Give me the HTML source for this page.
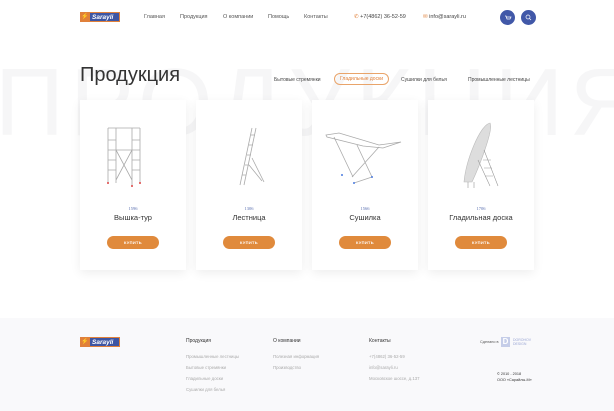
<!DOCTYPE html>
<html><head><meta charset="utf-8"><style>
*{margin:0;padding:0;box-sizing:border-box}
body{width:614px;height:411px;overflow:hidden;background:#fff;font-family:"Liberation Sans",sans-serif;position:relative;color:#333}
.a{position:absolute;white-space:nowrap}
.nav{font-size:5.5px;color:#555;top:14px}
.bg{position:absolute;left:-5px;top:55px;font-size:96px;color:#f6f6f7;letter-spacing:6px;font-weight:400;line-height:1}
.card{position:absolute;top:100px;width:106px;height:170px;background:#fff;box-shadow:0 3px 10px rgba(0,0,0,.07)}
.price{position:absolute;top:106px;width:100%;text-align:center;font-size:4.5px;color:#5a6fb0;font-family:"Liberation Serif",serif}
.name{position:absolute;top:113px;width:100%;text-align:center;font-size:7.5px;color:#333}
.btn{position:absolute;top:136px;left:27px;width:52px;height:13px;border-radius:7px;background:#e08a3c;color:#fff;font-size:4px;font-weight:bold;text-align:center;line-height:13px;letter-spacing:.3px}
.img{position:absolute;left:0;top:20px;width:106px;height:80px}
.logo{position:absolute;width:40px;height:10px;background:#3d55a3;color:#fff;font-size:6.5px;font-weight:bold;font-style:italic;line-height:10px;padding-left:11px;border:1px solid #e0803a}
.logo:before{content:"⚡";position:absolute;left:-1px;top:-1px;width:10px;height:10px;background:#e0803a;font-size:6px;text-align:center;font-style:normal}
.fh{font-size:5px;color:#333;top:338px}
.fl{font-size:4.3px;color:#aaa}
</style></head><body>
<div class="logo" style="left:80px;top:12px">Sarayli</div>
<div class="a nav" style="left:144px">Главная</div>
<div class="a nav" style="left:180px">Продукция</div>
<div class="a nav" style="left:223px">О компании</div>
<div class="a nav" style="left:268px">Помощь</div>
<div class="a nav" style="left:304px">Контакты</div>
<div class="a nav" style="left:354px;color:#444"><span style="color:#e0803a">✆</span> +7(4862) 36-52-59</div>
<div class="a nav" style="left:423px;color:#444"><span style="color:#e0803a">✉</span> info@sarayli.ru</div>
<div class="a" style="left:500px;top:10px;width:15px;height:15px;border-radius:50%;background:#4158a8"><svg width="15" height="15"><path d="M5 6h1l1 3h3l1-2H6.5" stroke="#fff" stroke-width=".7" fill="none"/></svg></div>
<div class="a" style="left:521px;top:10px;width:15px;height:15px;border-radius:50%;background:#4158a8"><svg width="15" height="15"><circle cx="7" cy="7" r="2" stroke="#fff" stroke-width=".7" fill="none"/><path d="M8.5 8.5l1.5 1.5" stroke="#fff" stroke-width=".7"/></svg></div>
<div class="bg">ПРОДУКЦИЯ</div>
<div class="a" style="left:80px;top:64px;font-size:20px;color:#333">Продукция</div>
<div class="a" style="left:274px;top:77px;font-size:5px;color:#444">Бытовые стремянки</div>
<div class="a" style="left:334px;top:73px;font-size:5px;color:#e0803a;border:1px solid #e9a46a;border-radius:6px;padding:2px 5px">Гладильные доски</div>
<div class="a" style="left:401px;top:77px;font-size:5px;color:#444">Сушилки для белья</div>
<div class="a" style="left:468px;top:77px;font-size:5px;color:#444">Промышленные лестницы</div>

<div class="card" style="left:80px"><svg class="img" viewBox="0 0 106 80"><g stroke="#aaa" stroke-width=".8" fill="none"><path d="M28 8v55M36 8v55M52 8v58M60 8v55M28 8h32M28 30h32M36 30l16 30M52 30l-16 30M28 20h8M28 40h8M28 50h8M52 20h8M52 40h8M52 50h8"/></g><circle cx="28" cy="63" r="1" fill="#d44"/><circle cx="52" cy="66" r="1" fill="#d44"/><circle cx="60" cy="63" r="1" fill="#d44"/></svg><div class="price">1596</div><div class="name">Вышка-тур</div><div class="btn">КУПИТЬ</div></div>
<div class="card" style="left:196px"><svg class="img" viewBox="0 0 106 80"><g stroke="#aaa" stroke-width=".8" fill="none"><path d="M44 65L56 8M48 65L60 8M53 45l13 16M56 38l12 24M46 55h4M49 45h4M51 35h4M53 25h4M55 15h4"/></g></svg><div class="price">1306</div><div class="name">Лестница</div><div class="btn">КУПИТЬ</div></div>
<div class="card" style="left:312px"><svg class="img" viewBox="0 0 106 80"><g stroke="#aaa" stroke-width=".8" fill="none"><path d="M14 15l13-2 40 12 22-3-18 6-20-2-36-9zM22 17l19 40M67 27l-27 30M45 25l15 32M60 57l-18 6"/></g><circle cx="30" cy="55" r="1" fill="#4a7be0"/><circle cx="42" cy="63" r="1" fill="#4a7be0"/><circle cx="60" cy="57" r="1" fill="#4a7be0"/></svg><div class="price">1566</div><div class="name">Сушилка</div><div class="btn">КУПИТЬ</div></div>
<div class="card" style="left:428px"><svg class="img" viewBox="0 0 106 80"><path d="M36 62C38 40 52 5 62 3 66 8 52 45 44 62z" fill="#ddd" stroke="#bbb" stroke-width=".6"/><g stroke="#999" stroke-width=".6" fill="none"><path d="M56 30l14 36M50 40l12 26M55 40h8M56 48h8M57 56h8M40 62v6M46 62v6"/></g></svg><div class="price">1706</div><div class="name">Гладильная доска</div><div class="btn">КУПИТЬ</div></div>

<div style="position:absolute;left:0;top:318px;width:614px;height:93px;background:#f9f9fb"></div>
<div class="logo" style="left:80px;top:337px">Sarayli</div>
<div class="a fh" style="left:186px">Продукция</div>
<div class="a fh" style="left:273px">О компании</div>
<div class="a fh" style="left:369px">Контакты</div>
<div class="a fl" style="left:186px;top:354px">Промышленные лестницы</div>
<div class="a fl" style="left:186px;top:365px">Бытовые стремянки</div>
<div class="a fl" style="left:186px;top:376px">Гладильные доски</div>
<div class="a fl" style="left:186px;top:387px">Сушилки для белья</div>
<div class="a fl" style="left:273px;top:354px">Полезная информация</div>
<div class="a fl" style="left:273px;top:365px">Производство</div>
<div class="a fl" style="left:369px;top:354px">+7(4862) 36-52-59</div>
<div class="a fl" style="left:369px;top:365px">info@sarayli.ru</div>
<div class="a fl" style="left:369px;top:376px">Московское шоссе, д.137</div>
<div class="a" style="left:480px;top:340px;font-size:3.8px;color:#555">Сделано в</div>
<div class="a" style="left:501px;top:337px;width:9px;height:10px;background:#c5cde8;color:#fff;font-size:8px;font-weight:bold;line-height:10px;text-align:center">D</div>
<div class="a" style="left:513px;top:338px;font-size:3.5px;color:#9aa6d4;line-height:4px">DOROHOV<br>DESIGN</div>
<div class="a" style="left:497px;top:372px;font-size:3.8px;color:#333;line-height:5.5px">© 2010 - 2018<br>ООО «Сарайлы-М»</div>
</body></html>
